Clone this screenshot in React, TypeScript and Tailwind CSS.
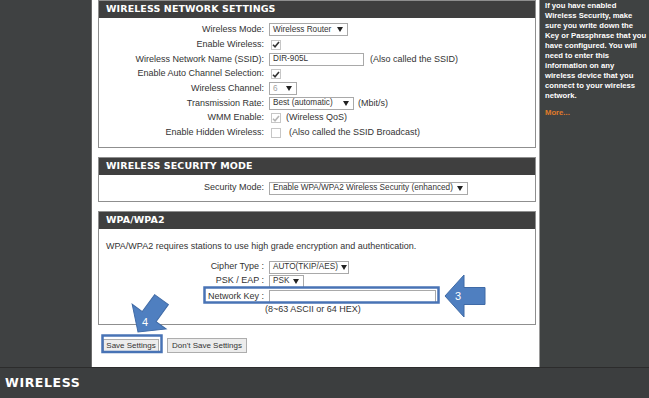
import type { ReactNode } from 'react'

const body = "font-['Liberation_Sans',Arial,sans-serif]"

function Caret() {
  return (
    <svg width="6" height="5" viewBox="0 0 6 5" className="shrink-0 ml-[3px]">
      <polygon points="0,0 6,0 3,5" fill="#222" />
    </svg>
  )
}

function Select({ text, w, dim }: { text: string; w: string; dim?: boolean }) {
  return (
    <div
      className={`${w} h-[13px] flex items-center justify-between bg-white border border-[#a9a9a9] pl-[3px] pr-[4px] text-[8.2px] leading-none overflow-hidden ${dim ? 'text-[#a0a0a0]' : 'text-[#333]'}`}
    >
      <span className="whitespace-nowrap">{text}</span>
      <Caret />
    </div>
  )
}

function Check({ on, dim }: { on?: boolean; dim?: boolean }) {
  return (
    <span className="ml-[2px] w-[10px] h-[10px] flex items-center justify-center bg-white border border-[#c6c6c6] shrink-0">
      {on && (
        <svg width="8" height="7" viewBox="0 0 8 7">
          <path d="M1 3.8 L3 5.8 L7 1" fill="none" stroke={dim ? '#b5b5b5' : '#333'} strokeWidth="1.6" />
        </svg>
      )}
    </span>
  )
}

function Row({ label, h = 'h-[14.7px]', children }: { label: string; h?: string; children?: ReactNode }) {
  return (
    <div className={`${h} flex items-center`}>
      <div className="w-[165px] shrink-0 text-right whitespace-nowrap">{label}</div>
      <div className="ml-[5px] flex items-center gap-[5px]">{children}</div>
    </div>
  )
}

function Panel({ title, children }: { title: string; children: ReactNode }) {
  return (
    <section className="border border-[#8f8f8f] bg-white">
      <div className="h-[17px] bg-[#3f3f3f] flex items-center pl-[7px] text-white text-[9.5px] font-bold font-['DejaVu_Sans',Verdana,sans-serif] tracking-[0.1px]">
        {title}
      </div>
      {children}
    </section>
  )
}

export default function App() {
  return (
    <div className={`relative w-[649px] h-[398px] overflow-hidden flex flex-col bg-[#3f4142] ${body} text-[9px] text-[#333]`}>
      <div className="h-[367px] flex">
        <div className="w-[92px] shrink-0 bg-[#3f4142] border-r border-[#6a6a6a]" />

        <main className="flex-1 bg-white pl-[6px] pr-[3px] border-r border-[#9a9a9a]">
          <Panel title="WIRELESS NETWORK SETTINGS">
            <div className="pt-[4.6px] pb-[7px]">
              <Row label="Wireless Mode:">
                <Select text="Wireless Router" w="w-[79px]" />
              </Row>
              <Row label="Enable Wireless:">
                <Check on />
              </Row>
              <Row label="Wireless Network Name (SSID):">
                <div className="w-[95px] h-[13px] border border-[#a9a9a9] bg-white flex items-center pl-[3px] text-[8.2px]">DIR-905L</div>
                <span className="ml-[1px]">(Also called the SSID)</span>
              </Row>
              <Row label="Enable Auto Channel Selection:">
                <Check on />
              </Row>
              <Row label="Wireless Channel:">
                <Select text="6" w="w-[28px]" dim />
              </Row>
              <Row label="Transmission Rate:">
                <Select text="Best (automatic)" w="w-[85px]" />
                <span className="-ml-[1px]">(Mbit/s)</span>
              </Row>
              <Row label="WMM Enable:">
                <Check on dim />
                <span>(Wireless QoS)</span>
              </Row>
              <Row label="Enable Hidden Wireless:">
                <Check />
                <span className="ml-[3px]">(Also called the SSID Broadcast)</span>
              </Row>
            </div>
          </Panel>

          <div className="mt-[9px]">
            <Panel title="WIRELESS SECURITY MODE">
              <div className="py-[6px]">
                <Row label="Security Mode:" h="h-[14px]">
                  <Select text="Enable WPA/WPA2 Wireless Security (enhanced)" w="w-[199px]" />
                </Row>
              </div>
            </Panel>
          </div>

          <div className="mt-[9px]">
            <Panel title="WPA/WPA2">
              <div className="pt-[11px] pb-[8px]">
                <div className="h-[14px] flex items-center pl-[7px]">
                  WPA/WPA2 requires stations to use high grade encryption and authentication.
                </div>
                <div className="mt-[6px]">
                  <Row label="Cipher Type :" h="h-[14px]">
                    <Select text="AUTO(TKIP/AES)" w="w-[80px]" />
                  </Row>
                  <Row label="PSK / EAP :" h="h-[14px]">
                    <Select text="PSK" w="w-[35px]" />
                  </Row>
                  <div className="mt-[1px]">
                    <Row label="Network Key :" h="h-[15px]">
                      <div className="w-[167px] h-[13px] border border-[#a9a9a9] bg-white" />
                    </Row>
                  </div>
                  <div className="h-[12px] flex items-center pl-[166px]">(8~63 ASCII or 64 HEX)</div>
                </div>
              </div>
            </Panel>
          </div>

          <div className="mt-[13px] h-[15px] flex items-center gap-[8px] pl-[5px]">
            <button className="w-[56px] h-[14px] bg-[#ececec] border border-[#adadad] text-[8px] text-[#333] leading-none">
              Save Settings
            </button>
            <button className="w-[80px] h-[15px] bg-[#ececec] border border-[#adadad] text-[8px] text-[#333] leading-none">
              Don't Save Settings
            </button>
          </div>
        </main>

        <aside className="w-[109px] shrink-0 bg-[#3f4242] pl-[5px] pt-[1px] text-white font-bold text-[7.7px] leading-[10px]">
          <p>
            If you have enabled<br />
            Wireless Security, make<br />
            sure you write down the<br />
            Key or Passphrase that you<br />
            have configured. You will<br />
            need to enter this<br />
            information on any<br />
            wireless device that you<br />
            connect to your wireless<br />
            network.
          </p>
          <p className="mt-[7px] text-[#e07b2a]">More...</p>
        </aside>
      </div>

      <footer className="flex-1 flex items-center pl-[5px] bg-[#3c3e3f] border-t border-[#2c2c2c]">
        <span className="text-white font-bold text-[12.5px] tracking-[0.6px] font-['DejaVu_Sans',Verdana,sans-serif]">WIRELESS</span>
      </footer>

      <svg className="absolute inset-0 pointer-events-none" width="649" height="398" viewBox="0 0 649 398">
        <rect x="204.5" y="287.5" width="234" height="15" fill="none" stroke="#4873b5" strokeWidth="2.5" />
        <rect x="102.5" y="335.5" width="59" height="16.5" fill="none" stroke="#4873b5" strokeWidth="2.5" />
        <g transform="translate(445 296)">
          <polygon points="0,0 19,-21 19,-8.5 40,-8.5 40,8.5 19,8.5 19,21" fill="#4f7fc0" stroke="#3f6aa6" strokeWidth="1" />
        </g>
        <text x="458" y="300" textAnchor="middle" fill="#fff" fontSize="11" fontFamily="Liberation Sans, Arial, sans-serif">3</text>
        <g transform="translate(138 332) rotate(-54)">
          <polygon points="0,0 19,-21 19,-8.5 40,-8.5 40,8.5 19,8.5 19,21" fill="#4f7fc0" stroke="#3f6aa6" strokeWidth="1" />
        </g>
        <text x="145" y="326" textAnchor="middle" fill="#fff" fontSize="11" fontFamily="Liberation Sans, Arial, sans-serif">4</text>
      </svg>
    </div>
  )
}
